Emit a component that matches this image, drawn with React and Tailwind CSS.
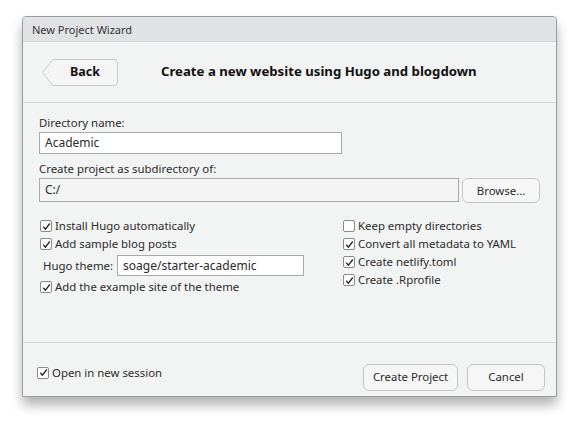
import React from "react";

function Check({ checked }) {
  return (
    <span className="flex h-[12px] w-[12px] shrink-0 items-center justify-center rounded-[2px] border border-[#8a8a8a] bg-white">
      {checked && (
        <svg width="9" height="9" viewBox="0 0 9 9">
          <path d="M1.3 4.8 L3.4 7.2 L7.8 1.5" fill="none" stroke="#222" strokeWidth="1.3" />
        </svg>
      )}
    </span>
  );
}

function CheckRow({ checked, label }) {
  return (
    <div className="flex h-[18px] items-center gap-[3px]">
      <Check checked={checked} />
      <span>{label}</span>
    </div>
  );
}

export default function App() {
  return (
    <div
      className="h-[430px] w-[573px] bg-white pl-[22px] pt-[16px] text-[11.4px] text-[#2b2b2b]"
      style={{ fontFamily: '"Noto Sans", "Open Sans", sans-serif' }}
    >
      <div className="flex h-[381px] w-[535px] flex-col rounded-t-[4px] border border-[#9c9c9c] bg-[#f2f3f3] shadow-[0_8px_12px_rgba(0,0,0,0.3)]">
        {/* title bar */}
        <div className="flex h-[25px] items-center rounded-t-[4px] border-b border-[#d6d7d9] bg-[#e1e2e4] pl-[9px] pt-[2px] text-[11px] text-[#333]">
          New Project Wizard
        </div>
        {/* header */}
        <div className="flex h-[61px] items-center border-b border-[#d9dadb] pl-[19px]">
          <div className="relative flex h-[27px] w-[76px] items-center justify-center pl-[10px] text-[12.5px] font-bold text-[#111]">
            <svg className="absolute inset-0" width="76" height="27" viewBox="0 0 76 27">
              <path
                d="M0.5 13.5 L11 0.5 L72 0.5 Q75.5 0.5 75.5 4 L75.5 23 Q75.5 26.5 72 26.5 L11 26.5 Z"
                fill="#f5f5f6"
                stroke="#c9c9c9"
              />
            </svg>
            <span className="relative">Back</span>
          </div>
          <div className="ml-[43px] text-[13.2px] font-bold text-[#111]">
            Create a new website using Hugo and blogdown
          </div>
        </div>
        {/* body */}
        <div className="flex flex-1 flex-col border-b border-[#d9dadb] px-[16px] pt-[11px]">
          <div className="leading-[18px]">Directory name:</div>
          <div className="flex h-[22px] w-[303px] items-center border border-[#a9a9a9] bg-white px-[5px] text-[12px]">
            Academic
          </div>
          <div className="mt-[6px] leading-[18px]">Create project as subdirectory of:</div>
          <div className="flex gap-[3px]">
            <div className="flex h-[24px] w-[421px] items-center border border-[#a9a9a9] bg-[#f4f4f4] px-[5px] text-[12px]">
              C:/
            </div>
            <div className="flex h-[25px] w-[78px] items-center justify-center rounded-[6px] border border-[#c4c4c4] bg-[#f6f6f6]">
              Browse...
            </div>
          </div>
          <div className="mt-[14px] flex">
            <div className="flex w-[304px] flex-col pl-[1px]">
              <CheckRow checked label="Install Hugo automatically" />
              <CheckRow checked label="Add sample blog posts" />
              <div className="mt-[2px] flex h-[21px] items-center pl-[3px]">
                <span className="mr-[4px]">Hugo theme:</span>
                <div className="flex h-[21px] w-[187px] items-center border border-[#a9a9a9] bg-white px-[5px] text-[12px]">
                  soage/starter-academic
                </div>
              </div>
              <div className="mt-[2px]">
                <CheckRow checked label="Add the example site of the theme" />
              </div>
            </div>
            <div className="flex flex-col">
              <CheckRow checked={false} label="Keep empty directories" />
              <CheckRow checked label="Convert all metadata to YAML" />
              <CheckRow checked label="Create netlify.toml" />
              <CheckRow checked label="Create .Rprofile" />
            </div>
          </div>
        </div>
        {/* footer */}
        <div className="flex h-[53px] items-center pl-[14px] pr-[11px]">
          <div className="mt-[6px]">
            <CheckRow checked label="Open in new session" />
          </div>
          <div className="ml-auto mt-[15px] flex gap-[9px]">
            <div className="flex h-[27px] w-[95px] items-center justify-center rounded-[6px] border border-[#c4c4c4] bg-[#f6f6f6]">
              Create Project
            </div>
            <div className="flex h-[27px] w-[78px] items-center justify-center rounded-[6px] border border-[#c4c4c4] bg-[#f6f6f6]">
              Cancel
            </div>
          </div>
        </div>
      </div>
    </div>
  );
}
